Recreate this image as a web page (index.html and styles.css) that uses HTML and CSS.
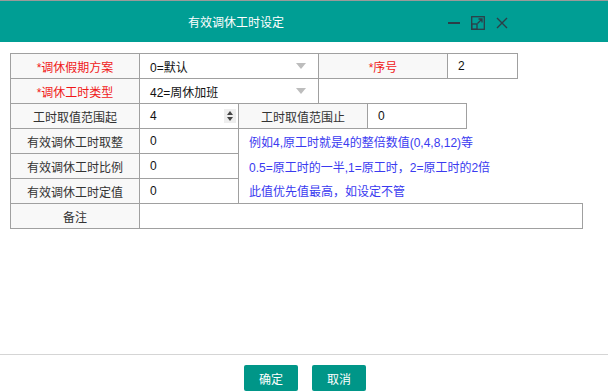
FILE: index.html
```html
<!DOCTYPE html>
<html lang="zh-CN">
<head>
  <meta charset="UTF-8" />
  <title>有效调休工时设定</title>
  <link rel="stylesheet" href="styles.css">
</head>
<body>
<div class="dialog">
  <div class="dialog-header">
    <div class="dialog-title">有效调休工时设定</div>
    <div class="header-tools">
      <svg width="14" height="14" viewBox="0 0 14 14"><rect x="1" y="6" width="12" height="2" fill="#2c3e48"/></svg>
      <svg width="14" height="14" viewBox="0 0 14 14" fill="none" stroke="#2c3e48" stroke-width="1.3">
        <rect x="0.7" y="0.7" width="12.6" height="12.6"/>
        <rect x="0.7" y="8" width="5.3" height="5.3"/>
        <path d="M6.5 7.5 L11 3 M7.5 3 H11 V6.5"/>
      </svg>
      <svg width="14" height="14" viewBox="0 0 14 14" stroke="#2c3e48" stroke-width="1.4"><path d="M2 2 L12 12 M12 2 L2 12"/></svg>
    </div>
  </div>

  <div class="dialog-body">
    <table class="form-table">
      <colgroup>
        <col style="width:129px"><col style="width:99px"><col style="width:80px"><col style="width:49px">
        <col style="width:80px"><col style="width:19px"><col style="width:51px"><col style="width:65px">
      </colgroup>
      <tr>
        <td class="label required">*调休假期方案</td>
        <td class="field" colspan="2"><div class="select">0=默认<span class="arrow"></span></div></td>
        <td class="label required" colspan="2">*序号</td>
        <td class="field" colspan="2">2</td>
        <td class="blank"></td>
      </tr>
      <tr>
        <td class="label required">*调休工时类型</td>
        <td class="field" colspan="2"><div class="select">42=周休加班<span class="arrow"></span></div></td>
        <td class="blank" colspan="5"></td>
      </tr>
      <tr>
        <td class="label">工时取值范围起</td>
        <td class="field"><div class="number">4<span class="spin"><i class="up"></i><i class="down"></i></span></div></td>
        <td class="label" colspan="2">工时取值范围止</td>
        <td class="field" colspan="2">0</td>
        <td class="blank" colspan="2"></td>
      </tr>
      <tr>
        <td class="label">有效调休工时取整</td>
        <td class="field">0</td>
        <td class="hint" colspan="6">例如4,原工时就是4的整倍数值(0,4,8,12)等</td>
      </tr>
      <tr>
        <td class="label">有效调休工时比例</td>
        <td class="field">0</td>
        <td class="hint" colspan="6">0.5=原工时的一半,1=原工时，2=原工时的2倍</td>
      </tr>
      <tr>
        <td class="label">有效调休工时定值</td>
        <td class="field">0</td>
        <td class="hint" colspan="6">此值优先值最高，如设定不管</td>
      </tr>
      <tr>
        <td class="label">备注</td>
        <td class="field" colspan="7"></td>
      </tr>
    </table>
  </div>

  <div class="dialog-footer">
    <button class="btn">确定</button>
    <button class="btn">取消</button>
  </div>
</div>
</body>
</html>
```

FILE: styles.css
```css
body {
  margin: 0;
  padding: 0;
  font-family: "Liberation Sans", Arial, "Noto Sans CJK SC", sans-serif;
  font-size: 12px;
  color: #333;
  background-color: #fff;
}
.dialog {
  width: 608px;
  height: 391px;
  display: flex;
  flex-direction: column;
  overflow: hidden;
}
.dialog-header {
  height: 41px;
  border-top: 1px solid #9a9a9a;
  background-color: #009e94;
  display: flex;
  align-items: center;
  flex-shrink: 0;
}
.dialog-title {
  flex: 1;
  padding-left: 25px;
  text-align: center;
  color: #fff;
  font-size: 12px;
}
.header-tools {
  display: flex;
  gap: 10px;
  margin-right: 99px;
  padding-top: 2px;
}
.dialog-body {
  flex: 1;
  padding: 11px 10px 0 10px;
}
.form-table {
  border-collapse: collapse;
  table-layout: fixed;
  width: 572px;
}
.form-table td {
  height: 24px;
  padding: 0;
  border: 1px solid #a0a0a0;
  white-space: nowrap;
}
.form-table td.label {
  background-color: #f8f8f8;
  text-align: center;
}
.form-table td.required {
  color: #f01818;
}
.form-table td.field {
  padding-left: 10px;
  color: #111;
}
.form-table td.blank {
  border: none;
}
.form-table td.hint {
  border-top: none;
  border-bottom: none;
  border-right: none;
  padding-left: 10px;
  color: #3a3af0;
}
.select, .number {
  display: flex;
  align-items: center;
  position: relative;
  padding-right: 12px;
}
.arrow {
  margin-left: auto;
  width: 0;
  height: 0;
  border-left: 5px solid transparent;
  border-right: 5px solid transparent;
  border-top: 6px solid #bdbdbd;
}
.spin {
  margin-left: auto;
  margin-right: -10px;
  width: 12px;
  height: 14px;
  background-color: #eee;
  display: flex;
  flex-direction: column;
  align-items: center;
  justify-content: center;
  gap: 2px;
}
.spin i {
  width: 0;
  height: 0;
  border-left: 3px solid transparent;
  border-right: 3px solid transparent;
}
.spin .up {
  border-bottom: 4px solid #444;
}
.spin .down {
  border-top: 4px solid #444;
}
.dialog-footer {
  box-sizing: border-box;
  height: 37px;
  border-top: 1px solid #d5d5d5;
  display: flex;
  justify-content: center;
  gap: 14px;
  padding-top: 10px;
  padding-left: 2px;
  flex-shrink: 0;
}
.btn {
  width: 54px;
  height: 26px;
  border: none;
  border-radius: 2px;
  background-color: #009688;
  color: #fff;
  font-family: "Liberation Sans", Arial, "Noto Sans CJK SC", sans-serif;
  font-size: 12px;
  cursor: pointer;
}
```
